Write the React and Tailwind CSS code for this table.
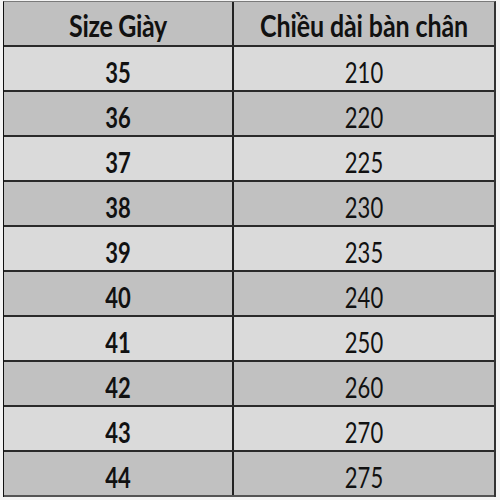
import React from "react";

const rows = [
  ["35", "210"],
  ["36", "220"],
  ["37", "225"],
  ["38", "230"],
  ["39", "235"],
  ["40", "240"],
  ["41", "250"],
  ["42", "260"],
  ["43", "270"],
  ["44", "275"],
];

const App = () => {
  return (
    <div
      className="w-[500px] h-[500px] bg-[#f4f4f4] pt-[1px] pl-[3px] pr-[4px]"
      style={{ fontFamily: "Lato, 'Open Sans', sans-serif" }}
    >
      <div className="border-t border-t-[#7a7a7a] border-l border-l-[#111] border-r-2 border-r-[#333]">
        {/* header */}
        <div className="flex h-[45px] bg-[#c0c0c0] border-b-2 border-[#2a2a2a] text-[#111]">
          <div className="w-[230px] flex items-center justify-center border-r-2 border-[#222] pt-[4px]">
            <span className="inline-block text-[25px] font-bold scale-y-[1.2] tracking-[-0.3px]">
              Size Giày
            </span>
          </div>
          <div className="flex-1 flex items-center justify-center pt-[4px]">
            <span className="inline-block text-[25px] font-bold scale-y-[1.2] tracking-[-0.1px]">
              Chiều dài bàn chân
            </span>
          </div>
        </div>

        {rows.map(([size, len], i) => (
          <div
            key={size}
            className={`flex h-[45px] border-b-2 text-[#111] ${
              i % 2 === 0 ? "bg-[#dadada]" : "bg-[#c1c1c1]"
            } ${i === rows.length - 1 ? "border-[#555]" : "border-[#2a2a2a]"}`}
          >
            <div className="w-[230px] flex items-center justify-center border-r-2 border-[#222] pt-[5px]">
              <span className="inline-block text-[22px] font-bold scale-y-[1.32]">
                {size}
              </span>
            </div>
            <div className="flex-1 flex items-center justify-center pt-[5px]">
              <span className="inline-block text-[22px] scale-y-[1.32]">
                {len}
              </span>
            </div>
          </div>
        ))}
      </div>
    </div>
  );
};

export default App;
